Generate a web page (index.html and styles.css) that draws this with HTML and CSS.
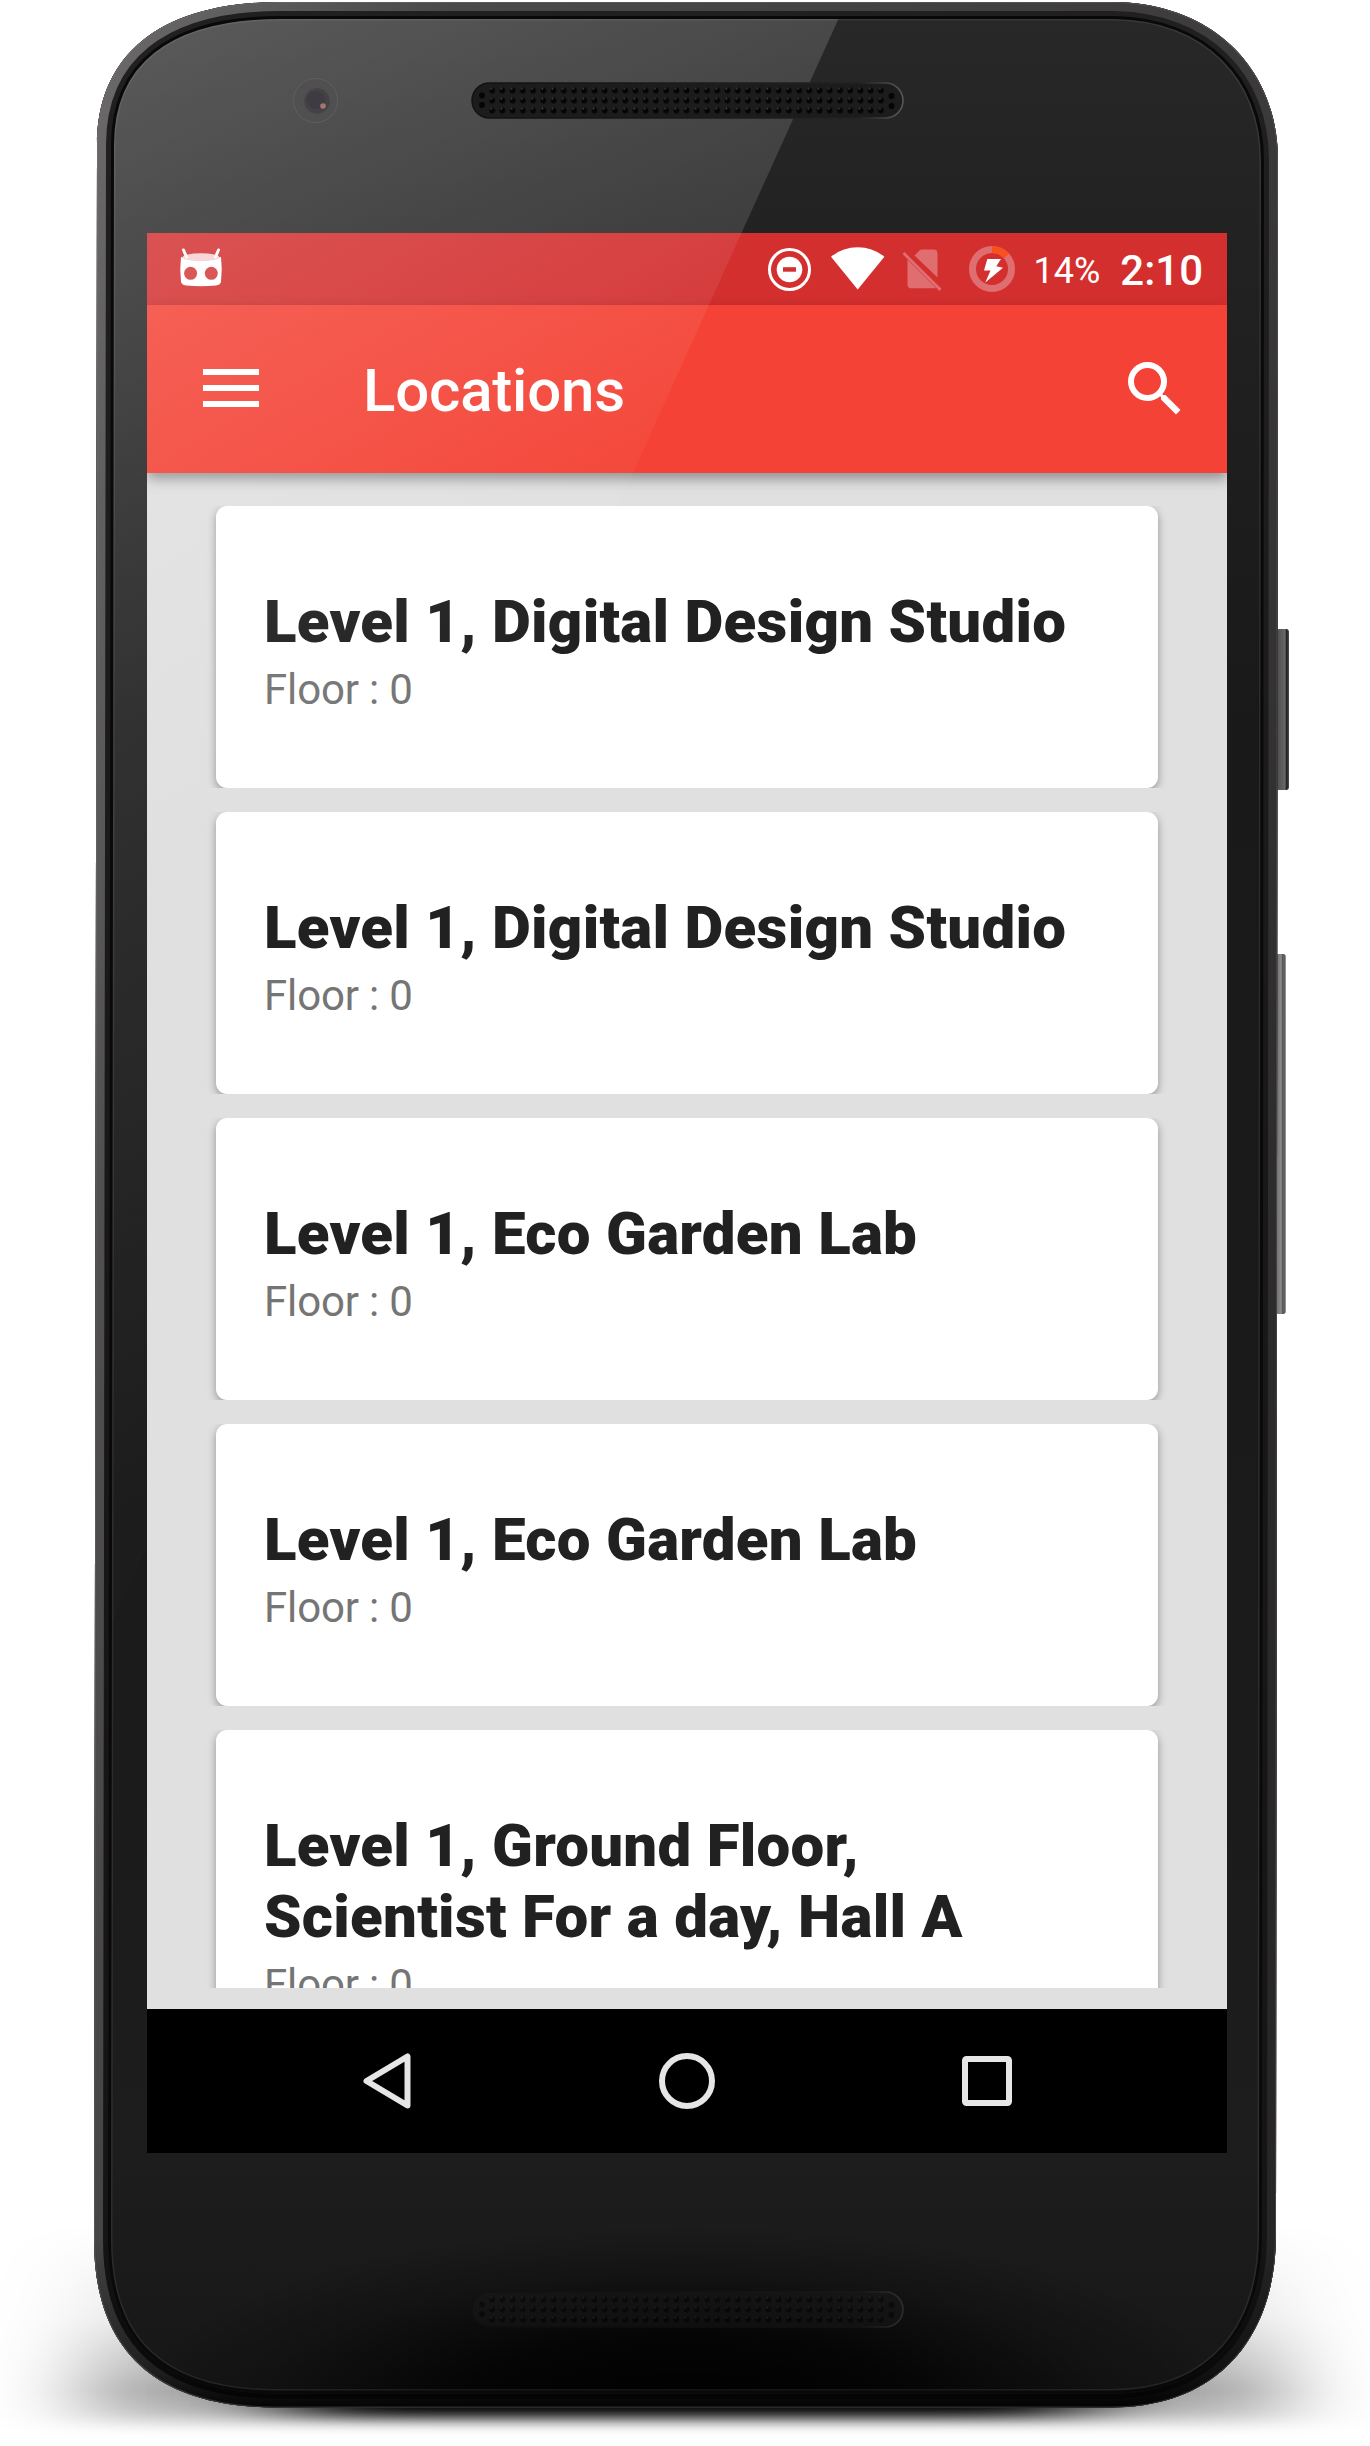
FILE: index.html
```html
<!DOCTYPE html>
<html lang="en">
<head>
<meta charset="utf-8">
<title>Locations</title>
<link rel="stylesheet" href="styles.css">
</head>
<body>
<div class="phone">
  <svg class="chassis" viewBox="0 0 1370 2446" aria-hidden="true">
    <defs>
      <path id="shell" d="M97 145C97 55 160 2 280 2H1115C1215 4 1278 70 1278 160L1276 2235C1276 2330 1225 2407.500 1110 2407.500H275C155 2407 94 2350 94 2240Z"/>
      <clipPath id="shellClip"><use href="#shell"/></clipPath>
      <clipPath id="glossClip"><path d="M0 0H847L0 1870Z"/></clipPath>
      <linearGradient id="rim" gradientUnits="userSpaceOnUse" x1="94" y1="0" x2="1278" y2="0">
        <stop offset="0" stop-color="#6c6a6b"/><stop offset=".3" stop-color="#4b4a4b"/><stop offset="1" stop-color="#3c3a3b"/>
      </linearGradient>
      <linearGradient id="rimDark" gradientUnits="userSpaceOnUse" x1="0" y1="0" x2="0" y2="2408">
        <stop offset="0" stop-color="#000" stop-opacity="0"/><stop offset=".5" stop-color="#000" stop-opacity=".25"/><stop offset=".93" stop-color="#000" stop-opacity=".35"/><stop offset=".985" stop-color="#000" stop-opacity=".7"/><stop offset="1" stop-color="#000" stop-opacity=".95"/>
      </linearGradient>
      <linearGradient id="glass" gradientUnits="userSpaceOnUse" x1="0" y1="0" x2="0" y2="2408">
        <stop offset="0" stop-color="#282828"/><stop offset=".1" stop-color="#222"/><stop offset=".3" stop-color="#191919"/><stop offset=".6" stop-color="#1a1a1a"/><stop offset=".9" stop-color="#1d1d1e"/><stop offset="1" stop-color="#161616"/>
      </linearGradient>
      <linearGradient id="glassGloss" gradientUnits="userSpaceOnUse" x1="110" y1="20" x2="760" y2="1146">
        <stop offset="0" stop-color="#fff" stop-opacity=".24"/><stop offset=".33" stop-color="#fff" stop-opacity=".14"/><stop offset=".55" stop-color="#fff" stop-opacity=".09"/><stop offset="1" stop-color="#fff" stop-opacity=".01"/>
      </linearGradient>
      <radialGradient id="chin" gradientUnits="userSpaceOnUse" cx="0" cy="0" r="1" gradientTransform="translate(685 2410) scale(560 185)">
        <stop offset="0" stop-color="#000"/><stop offset=".4" stop-color="#000" stop-opacity=".8"/><stop offset=".75" stop-color="#000" stop-opacity=".25"/><stop offset="1" stop-color="#000" stop-opacity="0"/>
      </radialGradient>
      <linearGradient id="floor" x1="0" y1="0" x2="0" y2="1">
        <stop offset="0" stop-opacity="0"/><stop offset=".45" stop-opacity=".1"/><stop offset=".8" stop-opacity=".34"/><stop offset=".9" stop-opacity=".26"/><stop offset="1" stop-opacity="0"/>
      </linearGradient>
      <filter id="wide" x="-30%" y="-30%" width="160%" height="160%"><feGaussianBlur stdDeviation="48 4"/></filter>
      <filter id="deep" x="-30%" y="-100%" width="160%" height="300%"><feGaussianBlur stdDeviation="60 7"/></filter>
      <linearGradient id="keyA" x1="0" y1="0" x2="1" y2="0"><stop offset="0" stop-color="#4d4b4c"/><stop offset=".7" stop-color="#686667"/><stop offset=".82" stop-color="#1c1c1c"/><stop offset="1" stop-color="#555"/></linearGradient>
      <linearGradient id="keyB" x1="0" y1="0" x2="1" y2="0"><stop offset="0" stop-color="#6e6c6d"/><stop offset=".55" stop-color="#8c8a8b"/><stop offset=".72" stop-color="#4a4a4a"/><stop offset=".85" stop-color="#777"/><stop offset="1" stop-color="#222"/></linearGradient>
      <linearGradient id="lip" x1="0" y1="0" x2="1" y2="0"><stop offset="0" stop-color="#111"/><stop offset=".9" stop-color="#222"/><stop offset="1" stop-color="#555a5e"/></linearGradient>
      <pattern id="holes" patternUnits="userSpaceOnUse" x="15.100" y="2.500" width="10.230" height="10">
        <circle cx="5.100" cy="5" r="2.900" fill="#050505"/><circle cx="4.100" cy="3.200" r=".9" fill="#484848"/>
      </pattern>
      <g id="grille">
        <rect width="431" height="35" rx="17.500" fill="#1c1c1c" stroke="url(#lip)" stroke-width="1.500"/>
        <rect x="15.100" y="2.500" width="399" height="30" fill="url(#holes)"/>
        <g fill="#050505"><circle cx="10" cy="12.500" r="2.900"/><circle cx="10" cy="22" r="2.900"/><circle cx="419.500" cy="13" r="2.900"/><circle cx="419.500" cy="23" r="2.900"/></g>
      </g>
    </defs>
    <rect x="85" y="2225" width="1200" height="207" fill="url(#floor)" filter="url(#wide)"/>
    <rect x="290" y="2380" width="790" height="37" fill="#000" filter="url(#deep)"/>
    <rect x="1276" y="629" width="13" height="161" rx="3" fill="url(#keyA)"/>
    <rect x="1276" y="954" width="9.500" height="360" rx="2" fill="url(#keyB)"/>
    <g clip-path="url(#shellClip)">
      <use href="#shell" fill="url(#glass)"/>
      <g clip-path="url(#glossClip)"><use href="#shell" fill="url(#glassGloss)"/></g>
      <use href="#shell" fill="url(#chin)"/>
      <g fill="none">
        <use href="#shell" stroke="#fff" stroke-opacity=".08" stroke-width="37"/>
        <use href="#shell" stroke="#090909" stroke-width="34"/>
        <use href="#shell" stroke="#202020" stroke-width="28"/>
        <use href="#shell" stroke="url(#rim)" stroke-width="18"/>
        <use href="#shell" stroke="url(#rimDark)" stroke-width="28"/>
        <use href="#shell" stroke="#777" stroke-opacity=".35" stroke-width="2"/>
      </g>
    </g>
    <circle cx="315.500" cy="100.500" r="22" fill="#505051" stroke="#5f5f60"/>
    <circle cx="317" cy="101" r="12.700" fill="#454147"/>
    <circle cx="316" cy="100" r="9" fill="#3f3b43"/>
    <circle cx="323" cy="106" r="2.800" fill="#a4786c"/>
    <use href="#grille" x="472" y="83"/>
    <use href="#grille" x="472" y="2292" opacity=".42"/>
  </svg>

  <main class="screen">
    <header class="status-bar">
      <svg class="cid" width="44" height="40" viewBox="0 0 44 40">
        <path d="M2 9Q22 16 42 9Q43.500 21 42 34Q41 37 37 37.500Q22 39 7 37.500Q3 37 2 34Q.5 21 2 9Z" fill="#fff"/>
        <ellipse cx="22" cy="9.200" rx="18.500" ry="3.900" fill="#f6d0d1"/>
        <path d="M4.500 2L7.500 9M39.500 2L36.500 9" stroke="#fff" stroke-width="3" stroke-linecap="round"/>
        <g fill="#d3393a"><circle cx="11.600" cy="25.300" r="6.500"/><circle cx="32.300" cy="25.300" r="6.500"/></g>
      </svg>
      <div class="status-icons">
        <svg class="dnd" width="43" height="43" viewBox="0 0 43 43">
          <circle cx="21.500" cy="21.500" r="20" fill="none" stroke="#fff" stroke-width="3"/>
          <circle cx="21.500" cy="21.500" r="12.800" fill="#fff"/><path d="M15 19.200h13v4.500H15z" fill="#d32f2f"/>
        </svg>
        <svg class="wifi" width="54" height="43" viewBox="0 0 54 43"><path d="M0 9.800Q11.500.3 26.700.3T53.400 9.800L26.700 42.500Z" fill="#fff"/></svg>
        <svg class="sim" width="40" height="43" viewBox="0 0 40 43" fill="#e06d6f">
          <path d="M12.500 6.500L17.500 1.500Q18.500.5 20 .5H31.500Q35.500.5 35.500 4.500V28.500ZM5.500 10.500L34 39Q33 39.300 31.500 39.300H9Q5.500 39.300 5.500 35.500Z"/>
          <path d="M2.500 3L39.500 39.800L37.500 42L.5 5Z"/>
        </svg>
        <svg class="battery" width="46" height="46" viewBox="0 0 46 46">
          <circle cx="23" cy="23" r="19.500" fill="none" stroke="#e06d6f" stroke-width="7"/>
          <path d="M23 3.500A19.500 19.500 0 0 1 37.500 10" fill="none" stroke="#f9501e" stroke-width="7"/>
          <path d="M18.300 13H32L27.300 20.300L34 21.700L16.300 36.500L21.500 24.500H15Z" fill="#fff"/>
        </svg>
        <span class="percent">14%</span>
        <time class="clock">2:10</time>
      </div>
    </header>

    <nav class="app-bar">
      <svg class="menu" width="56" height="38" viewBox="0 0 56 38" fill="#fff"><path d="M0 0h56v6H0zM0 16h56v6H0zM0 32h56v6H0z"/></svg>
      <h1 class="app-title">Locations</h1>
      <svg class="search" width="72" height="72" viewBox="0 0 24 24" fill="#fff"><path d="M15.500 14h-.79l-.28-.27A6.471 6.471 0 0 0 16 9.500 6.500 6.500 0 1 0 9.500 16c1.610 0 3.090-.59 4.230-1.570l.27.28v.79l5 4.990L20.490 19l-4.990-5zm-6 0C7.010 14 5 11.990 5 9.500S7.010 5 9.500 5 14 7.010 14 9.500 11.990 14 9.500 14z"/></svg>
    </nav>

    <section class="list">
      <div class="slot"><article class="card"><h2>Level 1, Digital Design Studio</h2><p>Floor : 0</p></article></div>
      <div class="slot"><article class="card"><h2>Level 1, Digital Design Studio</h2><p>Floor : 0</p></article></div>
      <div class="slot"><article class="card"><h2>Level 1, Eco Garden Lab</h2><p>Floor : 0</p></article></div>
      <div class="slot"><article class="card"><h2>Level 1, Eco Garden Lab</h2><p>Floor : 0</p></article></div>
      <div class="slot"><article class="card"><h2>Level 1, Ground Floor, Scientist For a day, Hall A</h2><p>Floor : 0</p></article></div>
    </section>

    <footer class="nav-bar">
      <svg width="50" height="58" viewBox="0 0 50 58"><path d="M45.500 4.500V53.500L4.500 29Z"/></svg>
      <svg width="58" height="58" viewBox="0 0 58 58"><circle cx="29" cy="29" r="25"/></svg>
      <svg width="50" height="50" viewBox="0 0 50 50"><rect x="3" y="3" width="44" height="44" rx="1.500"/></svg>
    </footer>
  </main>

  <svg class="gloss" viewBox="147 233 1080 1920" aria-hidden="true">
    <defs><linearGradient id="sheen" gradientUnits="userSpaceOnUse" x1="147" y1="233" x2="447" y2="753">
      <stop offset="0" stop-color="#fff" stop-opacity=".17"/><stop offset=".4" stop-color="#fff" stop-opacity=".1"/><stop offset=".7" stop-color="#fff" stop-opacity=".04"/><stop offset="1" stop-color="#fff" stop-opacity="0"/>
    </linearGradient></defs>
    <path d="M147 233H741.500L147 1546Z" fill="url(#sheen)"/>
  </svg>
</div>
</body>
</html>
```
FILE: styles.css
```css
* { box-sizing: border-box; }

body {
  margin: 0;
  background: #fff;
  font-family: Roboto, "Liberation Sans", sans-serif;
}

svg { display: block; flex: none; }

.phone {
  position: relative;
  width: 1370px;
  height: 2446px;
  padding: 233px 143px 293px 147px;
  overflow: hidden;
}

.chassis {
  position: absolute;
  inset: 0;
  width: 1370px;
  height: 2446px;
}

.gloss {
  position: absolute;
  z-index: 2;
  left: 147px;
  top: 233px;
  width: 1080px;
  height: 1920px;
  pointer-events: none;
}

.screen {
  position: relative;
  z-index: 1;
  display: flex;
  flex-direction: column;
  width: 1080px;
  height: 1920px;
  overflow: hidden;
  background: #e0e0e0;
}

.status-bar {
  display: flex;
  justify-content: space-between;
  height: 72px;
  padding: 0 24px 0 32px;
  background: #d32f2f;
  color: #fff;
}

.cid { margin-top: 15px; }

.status-icons { display: flex; align-items: flex-start; }
.dnd { margin: 15px 20px 0 0; }
.wifi { margin: 14px 17px 0 0; }
.sim { margin: 16px 27px 0 0; }
.battery { margin: 13px 18px 0 0; }

.percent {
  margin-right: 20px;
  font-size: 36px;
  line-height: 76px;
}

.clock {
  font-size: 42px;
  font-weight: 500;
  line-height: 75px;
}

.app-bar {
  position: relative;
  z-index: 1;
  display: flex;
  align-items: center;
  height: 168px;
  padding: 0 36px 0 56px;
  background: #f44336;
  box-shadow: 0 6px 12px rgba(0, 0, 0, .36);
  color: #fff;
}

.menu { margin-bottom: 2px; }

.app-title {
  flex: 1;
  margin: 4px 0 0 104px;
  font-size: 60px;
  font-weight: 500;
  letter-spacing: -.2px;
  line-height: 70px;
}

.list {
  display: flex;
  flex-direction: column;
  gap: 24px;
  height: 1515px;
  padding: 33px 59px 0;
  overflow: hidden;
}

.slot {
  flex: none;
  padding: 0 10px;
  overflow: hidden;
}

.card {
  min-height: 282px;
  padding: 80px 60px 72px 48px;
  border-radius: 11px;
  background: #fff;
  box-shadow: 0 3px 9px rgba(0, 0, 0, .35);
}

.card h2 {
  margin: 0 0 6px;
  color: #212121;
  font-size: 60px;
  font-weight: 900;
  letter-spacing: .28px;
  line-height: 71px;
}

.card p {
  margin: 0;
  color: #757575;
  font-size: 42px;
  letter-spacing: -.15px;
  line-height: 53px;
}

.nav-bar {
  display: flex;
  align-items: center;
  justify-content: space-between;
  height: 144px;
  margin-top: auto;
  padding: 0 215px;
  background: #000;
}

.nav-bar svg {
  fill: none;
  stroke: #e6e6e6;
  stroke-width: 6;
  stroke-linejoin: round;
}
```
